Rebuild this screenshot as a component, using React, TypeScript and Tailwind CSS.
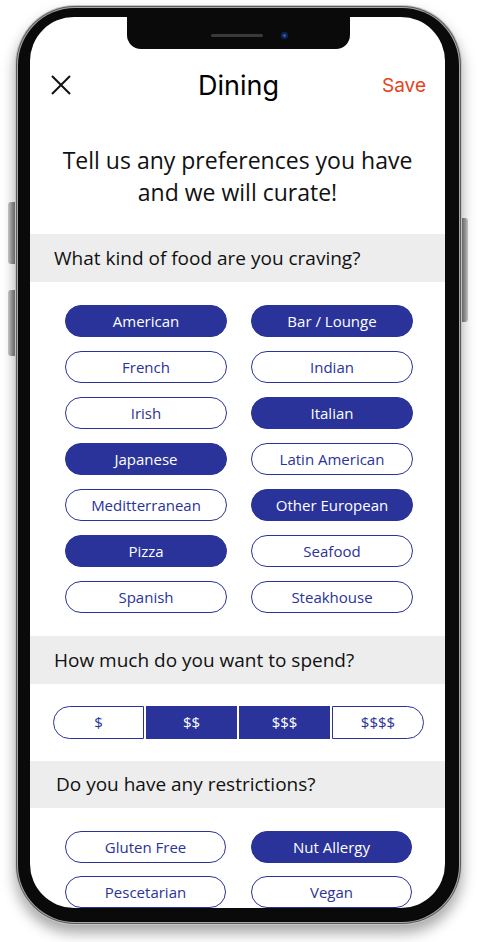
import React from "react";

const cuisines: [string, boolean][] = [
  ["American", true],
  ["Bar / Lounge", true],
  ["French", false],
  ["Indian", false],
  ["Irish", false],
  ["Italian", true],
  ["Japanese", true],
  ["Latin American", false],
  ["Meditterranean", false],
  ["Other European", true],
  ["Pizza", true],
  ["Seafood", false],
  ["Spanish", false],
  ["Steakhouse", false],
];

const restrictions: [string, boolean][] = [
  ["Gluten Free", false],
  ["Nut Allergy", true],
  ["Pescetarian", false],
  ["Vegan", false],
];

function Pill({ label, on }: { label: string; on: boolean }) {
  return (
    <div
      className={
        on
          ? "h-[32px] rounded-full border border-[#2a3399] bg-[#2a3399] text-white flex items-center justify-center text-[15px]"
          : "h-[32px] rounded-full border border-[#2a3399] bg-white text-[#2a3399] flex items-center justify-center text-[15px]"
      }
    >
      {label}
    </div>
  );
}

function Band({ text, pl }: { text: string; pl: string }) {
  return (
    <div className={"h-[48px] bg-[#ededed] flex items-center text-[19px] text-[#111] " + pl}>
      {text}
    </div>
  );
}

export default function App() {
  const body = { fontFamily: '"Open Sans", "Noto Sans", sans-serif' };
  const geo = { fontFamily: 'Inter, "Liberation Sans", sans-serif' };
  return (
    <div className="w-[477px] h-[942px] bg-white overflow-hidden" style={body}>
      <div className="relative ml-[15px] mt-[5px] w-[447px] h-[920px]">
        {/* side buttons */}
        <div className="absolute left-[-7px] top-[197px] w-[8px] h-[62px] rounded-l-[3px] bg-gradient-to-r from-[#cfcfcf] via-[#9a9a9a] to-[#777]" />
        <div className="absolute left-[-7px] top-[285px] w-[8px] h-[66px] rounded-l-[3px] bg-gradient-to-r from-[#cfcfcf] via-[#9a9a9a] to-[#777]" />
        <div className="absolute right-[-6px] top-[213px] w-[7px] h-[104px] rounded-r-[3px] bg-gradient-to-l from-[#cfcfcf] via-[#9a9a9a] to-[#777]" />
        {/* body */}
        <div className="relative w-full h-full rounded-[60px] bg-[#c4c4c4] p-[1px] shadow-[0_8px_14px_rgba(0,0,0,0.35)]">
          <div className="w-full h-full rounded-[59px] bg-[#5a5a5a] p-[1px]">
            <div className="w-full h-full rounded-[58px] bg-[#a8a8a8] p-[1px]">
              <div className="w-full h-full rounded-[57px] bg-[#0a0a0a] pl-[12px] pr-[14px] pt-[9px] pb-[14px]">
                {/* screen */}
                <div className="relative w-full h-full rounded-[44px] bg-white overflow-hidden flex flex-col">
                  {/* notch */}
                  <div className="absolute left-[97px] top-0 w-[223px] h-[32px] rounded-b-[14px] bg-[#0a0a0a]">
                    <div className="absolute left-[84px] top-[17px] w-[52px] h-[3px] rounded-full bg-[#3a3a3a]" />
                    <div className="absolute left-[154px] top-[15px] w-[7px] h-[7px] rounded-full bg-[#1f5fc0] border-[2px] border-[#0e2550]" />
                  </div>

                  {/* header */}
                  <div className="mt-[50px] h-[36px] grid grid-cols-[1fr_auto_1fr] items-center pl-[21px] pr-[19px] shrink-0">
                    <svg width="20" height="20" viewBox="0 0 20 20" className="block">
                      <path d="M1 1 L19 19 M19 1 L1 19" stroke="#111" strokeWidth="2" fill="none" />
                    </svg>
                    <div className="text-[27px] text-black leading-none" style={geo}>
                      Dining
                    </div>
                    <div className="justify-self-end text-[19px] text-[#e2431b] leading-none" style={geo}>
                      Save
                    </div>
                  </div>

                  {/* title */}
                  <div className="mt-[41px] text-center text-[23px] leading-[32px] text-[#111] shrink-0">
                    Tell us any preferences you have
                    <br />
                    and we will curate!
                  </div>

                  <div className="mt-[26px] shrink-0">
                    <Band text="What kind of food are you craving?" pl="pl-[24px]" />
                  </div>

                  <div className="pt-[23px] pb-[23px] pl-[35px] grid grid-cols-[162px_162px] gap-x-[24px] gap-y-[14px] shrink-0">
                    {cuisines.map(([l, on]) => (
                      <Pill key={l} label={l} on={on} />
                    ))}
                  </div>

                  <Band text="How much do you want to spend?" pl="pl-[24px]" />

                  <div className="pt-[22px] pb-[22px] pl-[23px] flex gap-[2px] shrink-0">
                    <div className="w-[91px] h-[33px] rounded-l-full border border-[#2a3399] text-[#2a3399] flex items-center justify-center text-[15px]">$</div>
                    <div className="w-[91px] h-[33px] bg-[#2a3399] text-white flex items-center justify-center text-[15px]">$$</div>
                    <div className="w-[91px] h-[33px] bg-[#2a3399] text-white flex items-center justify-center text-[15px]">$$$</div>
                    <div className="w-[92px] h-[33px] rounded-r-full border border-[#2a3399] text-[#2a3399] flex items-center justify-center text-[15px]">$$$$</div>
                  </div>

                  <Band text="Do you have any restrictions?" pl="pl-[26px]" />

                  <div className="pt-[23px] pl-[35px] grid grid-cols-[161px_161px] gap-x-[25px] gap-y-[13px] shrink-0">
                    {restrictions.map(([l, on]) => (
                      <Pill key={l} label={l} on={on} />
                    ))}
                  </div>
                </div>
              </div>
            </div>
          </div>
        </div>
      </div>
    </div>
  );
}
